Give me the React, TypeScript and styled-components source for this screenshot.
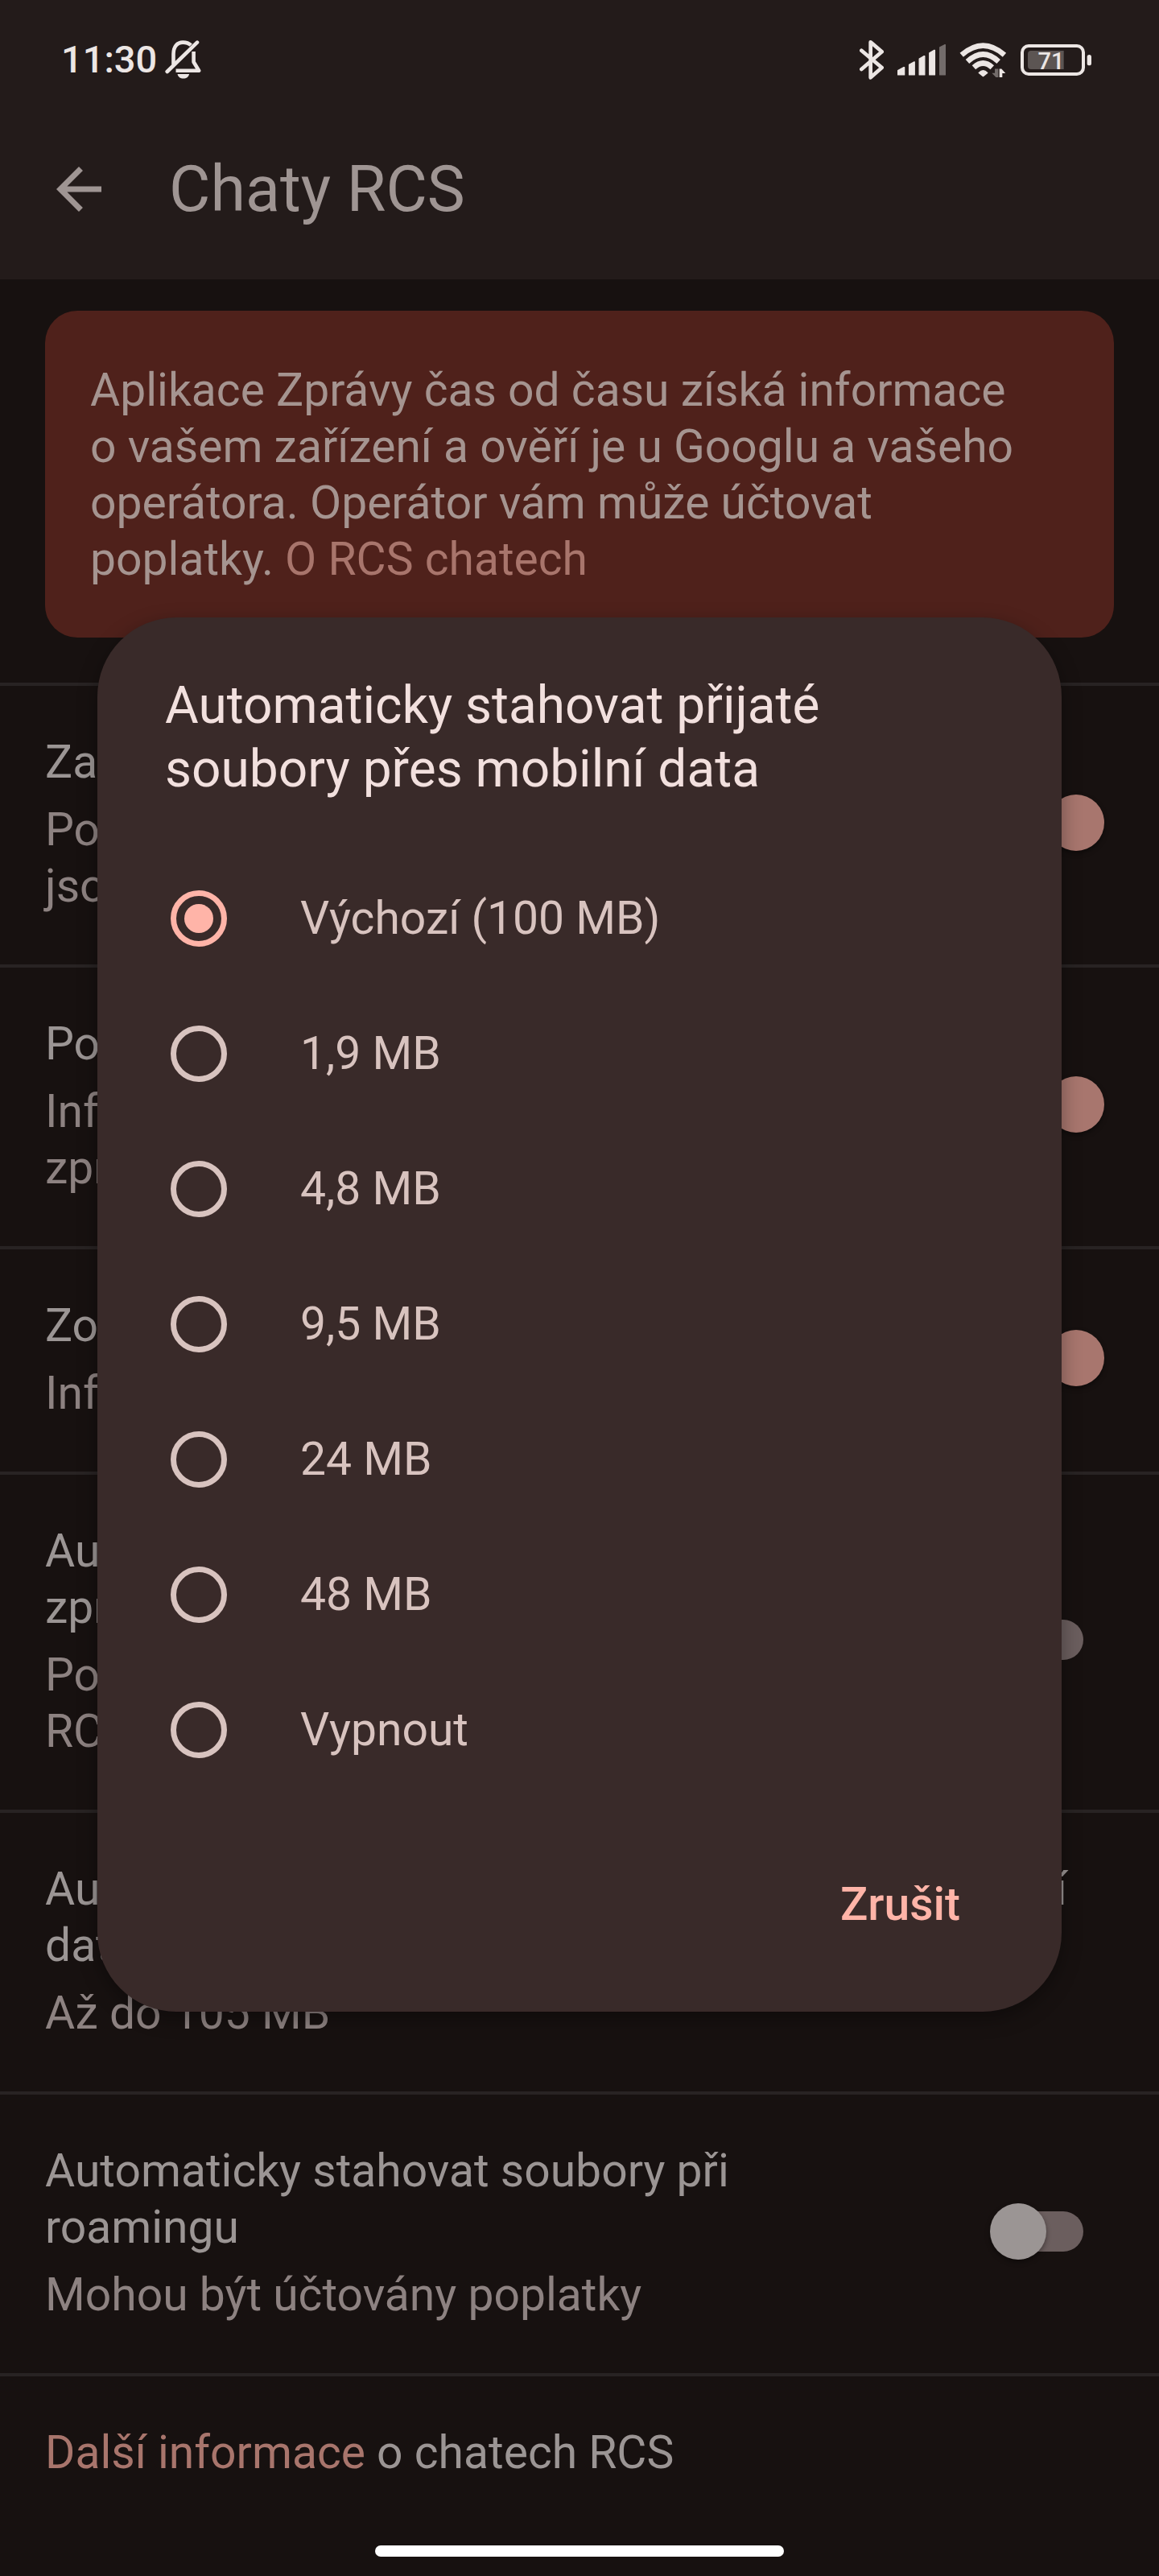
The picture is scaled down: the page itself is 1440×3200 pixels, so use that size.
import React, { useState } from 'react';
import styled, { createGlobalStyle } from 'styled-components';

const GlobalStyle = createGlobalStyle`
  *, *::before, *::after { box-sizing: border-box; }
  body {
    margin: 0;
    background: #171110;
    color: #9b9594;
    font-family: Roboto, "Noto Sans", sans-serif;
    font-size: 57px;
    line-height: 70px;
  }
  a { color: #a8756c; text-decoration: none; }
`;

const Screen = styled.div`
  position: relative;
  display: flex;
  flex-direction: column;
  min-height: 100vh;
`;

const Header = styled.header`
  background: #231b1a;
`;

const StatusBar = styled.div`
  display: flex;
  align-items: center;
  justify-content: space-between;
  height: 148px;
  padding: 0 84px 0 76px;
  color: #ece6e4;
`;

const StatusGroup = styled.div<{ $gap: number }>`
  display: flex;
  align-items: center;
  gap: ${(p) => p.$gap}px;
`;

const Clock = styled.span`
  font-size: 47px;
  font-weight: 500;
`;

const TitleBar = styled.div`
  display: flex;
  align-items: center;
  gap: 70px;
  height: 199px;
  padding: 0 56px 25px;
`;

const BackButton = styled.button`
  display: flex;
  padding: 0;
  border: 0;
  background: none;
  color: #9f9593;
`;

const PageTitle = styled.h1`
  margin: 0;
  color: #9f9593;
  font-size: 79px;
  font-weight: 400;
  line-height: 96px;
`;

const Content = styled.main`
  display: flex;
  flex-direction: column;
  padding-top: 39px;
`;

const Notice = styled.p`
  margin: 0 56px 56px;
  padding: 64px 96px 62px 56px;
  border-radius: 40px;
  background: #4f211b;
  color: #a59490;
`;

const SettingRow = styled.section`
  display: flex;
  align-items: center;
  justify-content: space-between;
  gap: 84px;
  padding: 60px 68px 62px 56px;
  border-top: 4px solid #282323;
`;

const SettingText = styled.div`
  display: flex;
  flex-direction: column;
  gap: 14px;
`;

const SettingTitle = styled.label`
  display: block;
`;

const SettingNote = styled.span`
  color: #8d8281;
`;

const Switch = styled.input`
  position: relative;
  flex: none;
  width: 142px;
  height: 70px;
  margin: 0 0 4px;
  appearance: none;

  &::before {
    content: '';
    position: absolute;
    top: 10px;
    left: 26px;
    width: 90px;
    height: 50px;
    border-radius: 25px;
    background: #6b5e5e;
  }
  &::after {
    content: '';
    position: absolute;
    top: 0;
    left: 0;
    width: 70px;
    height: 70px;
    border-radius: 50%;
    background: #9b9594;
    box-shadow: 0 3px 6px rgba(0, 0, 0, 0.4);
  }
  &:checked::before { background: #6e4640; }
  &:checked::after {
    left: 72px;
    background: #a8766e;
  }
`;

const GestureBar = styled.footer`
  display: flex;
  justify-content: center;
  margin-top: auto;
  padding-bottom: 24px;

  &::after {
    content: '';
    width: 508px;
    height: 14px;
    border-radius: 7px;
    background: #fff;
  }
`;

const Overlay = styled.div`
  position: absolute;
  inset: 0;
  display: flex;
  align-items: center;
  padding: 66px 121px 0;
`;

const Dialog = styled.form`
  flex: 1;
  display: flex;
  flex-direction: column;
  padding: 70px 84px;
  border-radius: 98px;
  background: #392a29;
  box-shadow: 0 8px 24px rgba(0, 0, 0, 0.35);
`;

const DialogTitle = styled.h2`
  max-width: 900px;
  margin: 0 0 62px;
  color: #f2e0de;
  font-size: 64px;
  font-weight: 400;
  line-height: 79px;
`;

const Options = styled.fieldset`
  min-width: 0;
  margin: 0 0 70px;
  padding: 0 7px;
  border: 0;
`;

const Option = styled.label`
  display: flex;
  align-items: center;
  gap: 91px;
  height: 168px;
  color: #d8c3bf;
`;

const Radio = styled.input`
  display: grid;
  place-items: center;
  flex: none;
  width: 70px;
  height: 70px;
  margin: 0;
  appearance: none;
  border: 7px solid #d8c3bf;
  border-radius: 50%;

  &:checked { border-color: #ffb4a8; }
  &:checked::before {
    content: '';
    width: 36px;
    height: 36px;
    border-radius: 50%;
    background: #ffb4a8;
  }
`;

const CancelButton = styled.button`
  align-self: flex-end;
  height: 126px;
  padding: 0 42px;
  border: 0;
  background: none;
  color: #ffb4a8;
  font: inherit;
  font-weight: 500;
`;

const BellOffIcon = () => (
  <svg width="45" height="48" viewBox="0 0 45 48" fill="none" stroke="currentColor" strokeWidth="4.6" strokeLinecap="round" strokeLinejoin="round" aria-hidden="true">
    <path d="M2.7 39 40 2.7" />
    <path d="M10.5 30V17C10.5 8 15 2.6 22.3 2.6c4.2 0 7.5 1.2 10 3.6" strokeLinecap="butt" />
    <path d="M35.600 14v13l6.500 10.800H13.500" strokeLinecap="butt" />
    <path d="M15.500 42h14.600c-.8 3.600-3.500 5.600-7.300 5.600s-6.500-2-7.300-5.600z" fill="currentColor" stroke="none" />
  </svg>
);

const BluetoothIcon = () => (
  <svg width="30" height="49" viewBox="78 57 90 147" fill="none" stroke="currentColor" strokeWidth="14" strokeLinecap="round" strokeLinejoin="round" aria-hidden="true">
    <path d="M85 95l76 64-42 37V64l42 36-76 65" />
  </svg>
);

const SignalIcon = () => (
  <svg width="60" height="39" viewBox="222 74 181 117" fill="currentColor" stroke="currentColor" strokeWidth="4" strokeLinejoin="round" aria-hidden="true">
    <path d="M224 172l22-12h2v28h-24z" />
    <path d="M266 150l18-10h2v48h-20z" />
    <path d="M304 128l18-10h2v70h-20z" />
    <path d="M342 106l18-10h2v92h-20z" />
    <path d="M381 85l18-9h2v112h-20z" opacity="0.4" />
  </svg>
);

const WifiIcon = () => (
  <svg width="59" height="43" viewBox="452 67 176 130" fill="none" stroke="currentColor" strokeWidth="20" aria-hidden="true">
    <path d="M459 113Q540 43 620 113" />
    <path d="M481 138Q540 84 598 138" />
    <path d="M505 160Q540 128 574 160" />
    <path d="M524 180Q540 164 556 180L540 193Z" fill="currentColor" strokeWidth="4" strokeLinejoin="round" />
    <path d="M597 165v32h-9l-15-16h11v-16z" fill="currentColor" stroke="none" opacity="0.4" />
    <path d="M601 165h8l15 17h-12v15h-11z" fill="currentColor" stroke="none" />
  </svg>
);

const BatteryIcon = () => (
  <svg width="88" height="39" viewBox="684 72 264 117" fill="none" role="img" aria-label="71 %">
    <rect x="690" y="78" width="228" height="105" rx="24" stroke="currentColor" strokeWidth="12" />
    <path d="M723 96h122v69H723q-12 0-12-12v-45q0-12 12-12z" fill="#5c5553" />
    <rect x="932" y="111" width="16" height="40" rx="8" fill="currentColor" />
    <text x="798" y="165" fill="currentColor" fontSize="87" fontWeight="500" textAnchor="middle">71</text>
  </svg>
);

const BackIcon = () => (
  <svg width="84" height="84" viewBox="0 0 24 24" fill="currentColor" aria-hidden="true">
    <path d="M20 11H7.830l5.590-5.590L12 4l-8 8 8 8 1.410-1.410L7.830 13H20v-2z" />
  </svg>
);

type Setting = {
  id: string;
  title: React.ReactNode;
  note: React.ReactNode;
  on?: boolean;
};

const settings: Setting[] = [
  { id: 'rcs', title: 'Zapnout chaty RCS', note: <>Používat Wi-Fi nebo data k chatům, když<br />jsou k dispozici</>, on: true },
  { id: 'receipts', title: 'Posílat potvrzení o přečtení', note: <>Informovat ostatní, že jste si přečetli<br />zprávy</>, on: true },
  { id: 'typing', title: 'Zobrazovat indikátory psaní', note: 'Informovat ostatní, že právě píšete', on: true },
  { id: 'fallback', title: <>Automaticky znovu odeslat<br />zprávy jako SMS nebo MMS</>, note: <>Pokud nelze zprávu odeslat přes chat<br />RCS</>, on: false },
  { id: 'mobile', title: 'Automaticky stahovat přijaté soubory přes mobilní data', note: 'Až do 105 MB' },
  { id: 'roaming', title: 'Automaticky stahovat soubory při roamingu', note: 'Mohou být účtovány poplatky', on: false },
];

const limits = ['Výchozí (100 MB)', '1,9 MB', '4,8 MB', '9,5 MB', '24 MB', '48 MB', 'Vypnout'];

export default function App() {
  const [limit, setLimit] = useState(limits[0]);

  return (
    <>
      <GlobalStyle />
      <Screen>
        <Header>
          <StatusBar>
            <StatusGroup $gap={10}>
              <Clock>11:30</Clock>
              <BellOffIcon />
            </StatusGroup>
            <StatusGroup $gap={17}>
              <BluetoothIcon />
              <SignalIcon />
              <WifiIcon />
              <BatteryIcon />
            </StatusGroup>
          </StatusBar>
          <TitleBar>
            <BackButton type="button" aria-label="Zpět"><BackIcon /></BackButton>
            <PageTitle>Chaty RCS</PageTitle>
          </TitleBar>
        </Header>

        <Content>
          <Notice>
            Aplikace Zprávy čas od času získá informace o&nbsp;vašem zařízení a ověří je
            u&nbsp;Googlu a vašeho operátora. Operátor vám může účtovat poplatky.{' '}
            <a href="#o-rcs">O RCS chatech</a>
          </Notice>

          {settings.map(({ id, title, note, on }) => (
            <SettingRow key={id}>
              <SettingText>
                {on === undefined ? <span>{title}</span> : <SettingTitle htmlFor={id}>{title}</SettingTitle>}
                <SettingNote>{note}</SettingNote>
              </SettingText>
              {on !== undefined && <Switch id={id} type="checkbox" role="switch" defaultChecked={on} />}
            </SettingRow>
          ))}

          <SettingRow>
            <span><a href="#dalsi">Další informace</a> o chatech RCS</span>
          </SettingRow>
        </Content>

        <GestureBar />

        <Overlay>
          <Dialog role="dialog" aria-labelledby="dialog-title">
            <DialogTitle id="dialog-title">Automaticky stahovat přijaté soubory přes mobilní data</DialogTitle>
            <Options aria-labelledby="dialog-title">
              {limits.map((name) => (
                <Option key={name}>
                  <Radio type="radio" name="limit" checked={limit === name} onChange={() => setLimit(name)} />
                  {name}
                </Option>
              ))}
            </Options>
            <CancelButton type="button">Zrušit</CancelButton>
          </Dialog>
        </Overlay>
      </Screen>
    </>
  );
}
